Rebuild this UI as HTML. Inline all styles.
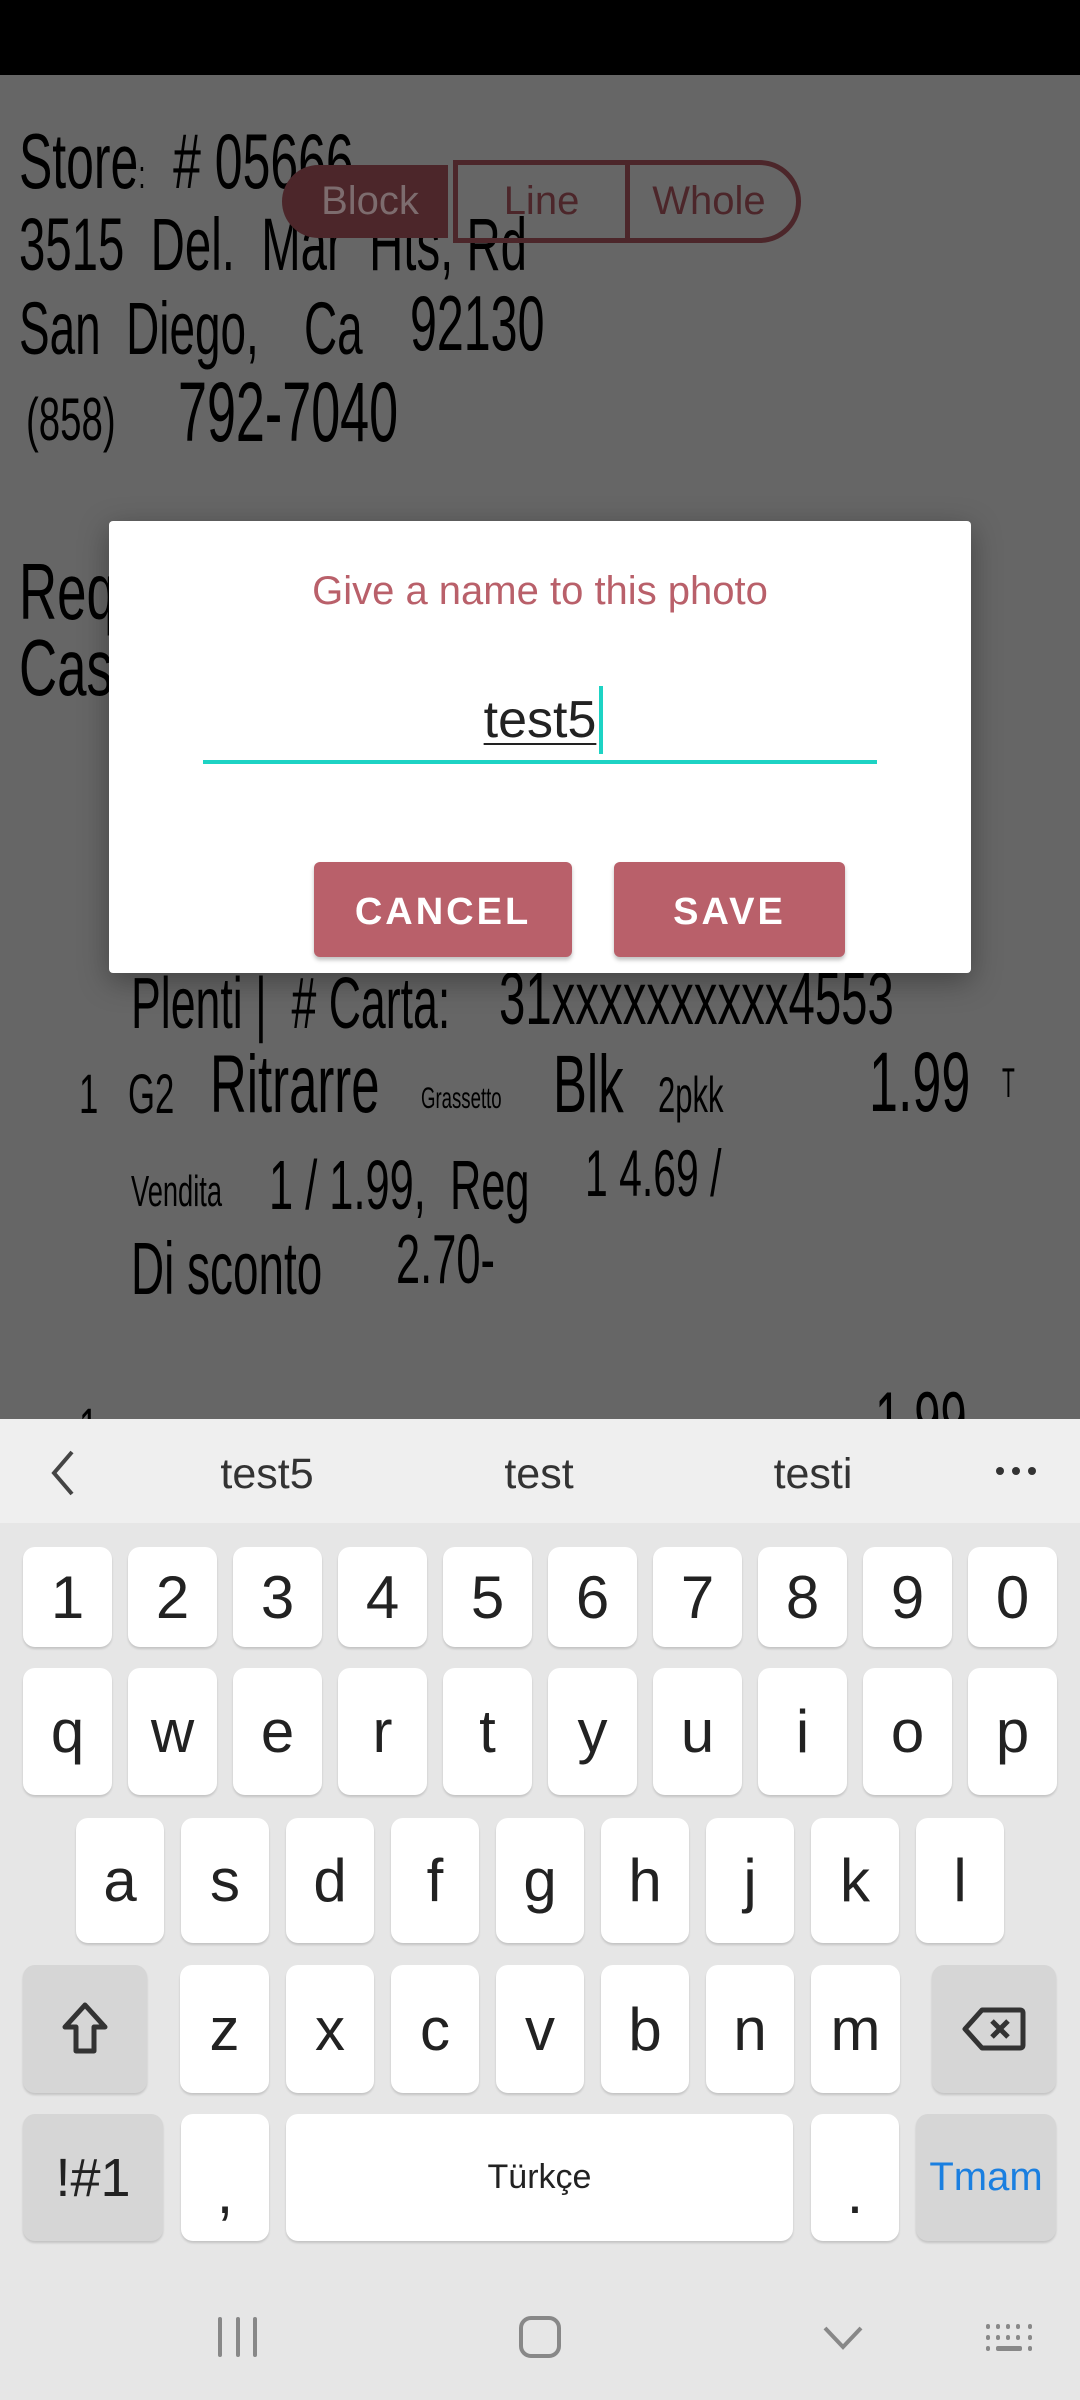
<!DOCTYPE html>
<html><head><meta charset="utf-8"><style>
*{margin:0;padding:0;box-sizing:border-box}
body{width:1080px;height:2400px;position:relative;overflow:hidden;background:#666;font-family:"Liberation Sans",sans-serif}
.a{position:absolute}
.r{position:absolute;color:#000;font-family:"Liberation Sans",sans-serif;transform-origin:0 0;white-space:nowrap;line-height:1}
.k{position:absolute;background:#fff;border-radius:12px;box-shadow:0 2px 2px rgba(0,0,0,.15);color:#222;display:flex;align-items:center;justify-content:center;font-size:60px}
.s{background:#d6d6d6}
.sg{position:absolute;top:1450px;font-size:43px;color:#333;transform:translateX(-50%)}
</style></head><body>
<div class="a" style="left:0;top:0;width:1080px;height:75px;background:#000"></div>

<div class="r" style="left:19px;top:122px;font-size:78px;transform:scaleX(.64)">Store<span style="font-size:40px">:</span> &nbsp;# 05666</div>
<div class="r" style="left:19px;top:208px;font-size:74px;transform:scaleX(.64)">3515 &nbsp;Del. &nbsp;Mar &nbsp;Hts, Rd</div>
<div class="r" style="left:19px;top:292px;font-size:74px;transform:scaleX(.62)">San &nbsp;Diego,</div>
<div class="r" style="left:304px;top:292px;font-size:74px;transform:scaleX(.62)">Ca</div>
<div class="r" style="left:410px;top:284px;font-size:78px;transform:scaleX(.62)">92130</div>
<div class="r" style="left:26px;top:390px;font-size:60px;transform:scaleX(.64)">(858)</div>
<div class="r" style="left:178px;top:370px;font-size:84px;transform:scaleX(.62)">792-7040</div>
<div class="r" style="left:19px;top:552px;font-size:80px;transform:scaleX(.66)">Req</div>
<div class="r" style="left:19px;top:628px;font-size:80px;transform:scaleX(.66)">Cas</div>
<div class="r" style="left:131px;top:968px;font-size:72px;transform:scaleX(.62)">Plenti | &nbsp;# Carta:</div>
<div class="r" style="left:499px;top:962px;font-size:74px;transform:scaleX(.64)">31xxxxxxxxxx4553</div>
<div class="r" style="left:79px;top:1066px;font-size:56px;transform:scaleX(.62)">1</div>
<div class="r" style="left:128px;top:1066px;font-size:56px;transform:scaleX(.62)">G2</div>
<div class="r" style="left:210px;top:1044px;font-size:82px;transform:scaleX(.62)">Ritrarre</div>
<div class="r" style="left:421px;top:1084px;font-size:30px;transform:scaleX(.62)">Grassetto</div>
<div class="r" style="left:553px;top:1044px;font-size:82px;transform:scaleX(.62)">Blk</div>
<div class="r" style="left:658px;top:1070px;font-size:50px;transform:scaleX(.62)">2pkk</div>
<div class="r" style="left:869px;top:1040px;font-size:84px;transform:scaleX(.62)">1.99</div>
<div class="r" style="left:1002px;top:1062px;font-size:42px;transform:scaleX(.5)">T</div>
<div class="r" style="left:131px;top:1170px;font-size:44px;transform:scaleX(.62)">Vendita</div>
<div class="r" style="left:269px;top:1150px;font-size:70px;transform:scaleX(.62)">1 / 1.99, &nbsp;Reg</div>
<div class="r" style="left:585px;top:1140px;font-size:66px;transform:scaleX(.62)">1 4.69 /</div>
<div class="r" style="left:131px;top:1232px;font-size:74px;transform:scaleX(.62)">Di sconto</div>
<div class="r" style="left:396px;top:1224px;font-size:70px;transform:scaleX(.62)">2.70-</div>
<div class="r" style="left:79px;top:1400px;font-size:56px;transform:scaleX(.62)">1</div>
<div class="r" style="left:875px;top:1382px;font-size:76px;transform:scaleX(.62)">1.99</div>

<!-- toggle -->
<div class="a" style="left:282px;top:165px;width:166px;height:73px;background:#4c262a;border-radius:37px 0 0 37px;color:#7d6c6e;font-size:40px;display:flex;align-items:center;justify-content:center;padding-left:10px">Block</div>
<div class="a" style="left:453px;top:160px;width:177px;height:83px;border:5px solid #4c262a;color:#4c262a;font-size:40px;display:flex;align-items:center;justify-content:center">Line</div>
<div class="a" style="left:625px;top:160px;width:176px;height:83px;border:5px solid #4c262a;border-radius:0 42px 42px 0;color:#4c262a;font-size:40px;display:flex;align-items:center;justify-content:center;padding-right:8px">Whole</div>

<!-- dialog -->
<div class="a" style="left:109px;top:521px;width:862px;height:452px;background:#fff;border-radius:4px;box-shadow:0 8px 30px rgba(0,0,0,.35)"></div>
<div class="a" style="left:109px;top:569px;width:862px;text-align:center;font-size:40px;color:#b9606a">Give a name to this photo</div>
<div class="a" style="left:203px;top:690px;width:674px;text-align:center;font-size:52px;color:#222"><span style="text-decoration:underline;text-decoration-thickness:2px;text-underline-offset:6px">test5</span></div>
<div class="a" style="left:599px;top:686px;width:4px;height:68px;background:#1dd3c4"></div>
<div class="a" style="left:203px;top:760px;width:674px;height:4px;background:#1dd3c4"></div>
<div class="a" style="left:314px;top:862px;width:258px;height:95px;background:#b9606a;border-radius:6px;box-shadow:0 3px 4px rgba(0,0,0,.25);color:#fff;font-weight:bold;font-size:38px;letter-spacing:3px;display:flex;align-items:center;justify-content:center;padding-top:6px">CANCEL</div>
<div class="a" style="left:614px;top:862px;width:231px;height:95px;background:#b9606a;border-radius:6px;box-shadow:0 3px 4px rgba(0,0,0,.25);color:#fff;font-weight:bold;font-size:38px;letter-spacing:3px;display:flex;align-items:center;justify-content:center;padding-top:6px">SAVE</div>

<!-- keyboard -->
<div class="a" style="left:0;top:1419px;width:1080px;height:981px;background:#e6e6e6"></div>
<div class="a" style="left:0;top:1419px;width:1080px;height:104px;background:#efefef"></div>
<svg class="a" style="left:48px;top:1448px" width="30" height="50"><path d="M24 4 L6 25 L24 46" fill="none" stroke="#444" stroke-width="4"/></svg>
<div class="sg" style="left:267px">test5</div>
<div class="sg" style="left:539px">test</div>
<div class="sg" style="left:813px">testi</div>
<svg class="a" style="left:994px;top:1464px" width="46" height="14"><circle cx="6" cy="7" r="4" fill="#333"/><circle cx="22" cy="7" r="4" fill="#333"/><circle cx="38" cy="7" r="4" fill="#333"/></svg>

<div class="k" style="left:23px;top:1547px;width:89px;height:100px">1</div>
<div class="k" style="left:128px;top:1547px;width:89px;height:100px">2</div>
<div class="k" style="left:233px;top:1547px;width:89px;height:100px">3</div>
<div class="k" style="left:338px;top:1547px;width:89px;height:100px">4</div>
<div class="k" style="left:443px;top:1547px;width:89px;height:100px">5</div>
<div class="k" style="left:548px;top:1547px;width:89px;height:100px">6</div>
<div class="k" style="left:653px;top:1547px;width:89px;height:100px">7</div>
<div class="k" style="left:758px;top:1547px;width:89px;height:100px">8</div>
<div class="k" style="left:863px;top:1547px;width:89px;height:100px">9</div>
<div class="k" style="left:968px;top:1547px;width:89px;height:100px">0</div>

<div class="k" style="left:23px;top:1668px;width:89px;height:127px">q</div>
<div class="k" style="left:128px;top:1668px;width:89px;height:127px">w</div>
<div class="k" style="left:233px;top:1668px;width:89px;height:127px">e</div>
<div class="k" style="left:338px;top:1668px;width:89px;height:127px">r</div>
<div class="k" style="left:443px;top:1668px;width:89px;height:127px">t</div>
<div class="k" style="left:548px;top:1668px;width:89px;height:127px">y</div>
<div class="k" style="left:653px;top:1668px;width:89px;height:127px">u</div>
<div class="k" style="left:758px;top:1668px;width:89px;height:127px">i</div>
<div class="k" style="left:863px;top:1668px;width:89px;height:127px">o</div>
<div class="k" style="left:968px;top:1668px;width:89px;height:127px">p</div>

<div class="k" style="left:76px;top:1818px;width:88px;height:125px">a</div>
<div class="k" style="left:181px;top:1818px;width:88px;height:125px">s</div>
<div class="k" style="left:286px;top:1818px;width:88px;height:125px">d</div>
<div class="k" style="left:391px;top:1818px;width:88px;height:125px">f</div>
<div class="k" style="left:496px;top:1818px;width:88px;height:125px">g</div>
<div class="k" style="left:601px;top:1818px;width:88px;height:125px">h</div>
<div class="k" style="left:706px;top:1818px;width:88px;height:125px">j</div>
<div class="k" style="left:811px;top:1818px;width:88px;height:125px">k</div>
<div class="k" style="left:916px;top:1818px;width:88px;height:125px">l</div>

<div class="k s" style="left:23px;top:1965px;width:124px;height:128px"><svg width="50" height="56"><path d="M25 4 L5 26 H16 V50 H34 V26 H45 Z" fill="none" stroke="#333" stroke-width="5" stroke-linejoin="round"/></svg></div>
<div class="k" style="left:180px;top:1965px;width:89px;height:128px">z</div>
<div class="k" style="left:286px;top:1965px;width:88px;height:128px">x</div>
<div class="k" style="left:391px;top:1965px;width:88px;height:128px">c</div>
<div class="k" style="left:496px;top:1965px;width:88px;height:128px">v</div>
<div class="k" style="left:601px;top:1965px;width:88px;height:128px">b</div>
<div class="k" style="left:706px;top:1965px;width:88px;height:128px">n</div>
<div class="k" style="left:811px;top:1965px;width:89px;height:128px">m</div>
<div class="k s" style="left:932px;top:1965px;width:124px;height:128px"><svg width="64" height="46"><path d="M20 4 H58 Q61 4 61 7 V39 Q61 42 58 42 H20 L3 23 Z" fill="none" stroke="#333" stroke-width="5" stroke-linejoin="round"/><path d="M30 15 L46 31 M46 15 L30 31" stroke="#333" stroke-width="5"/></svg></div>

<div class="k s" style="left:23px;top:2114px;width:140px;height:127px;font-size:54px">!#1</div>
<div class="k" style="left:181px;top:2114px;width:88px;height:127px;padding-top:30px">,</div>
<div class="k" style="left:286px;top:2114px;width:507px;height:127px;font-size:34px">Türkçe</div>
<div class="k" style="left:811px;top:2114px;width:88px;height:127px;padding-top:30px">.</div>
<div class="k s" style="left:916px;top:2114px;width:140px;height:127px;font-size:40px;color:#1a7fe0">Tmam</div>

<!-- nav -->
<div class="a" style="left:218px;top:2317px;width:4px;height:40px;background:#888;border-radius:2px"></div>
<div class="a" style="left:236px;top:2317px;width:4px;height:40px;background:#888;border-radius:2px"></div>
<div class="a" style="left:253px;top:2317px;width:4px;height:40px;background:#888;border-radius:2px"></div>
<div class="a" style="left:519px;top:2316px;width:42px;height:42px;border:4px solid #888;border-radius:12px"></div>
<svg class="a" style="left:822px;top:2325px" width="42" height="26"><path d="M3 3 L21 22 L39 3" fill="none" stroke="#888" stroke-width="4"/></svg>
<svg class="a" style="left:986px;top:2324px" width="48" height="28"><g fill="#888"><rect x="0" y="0" width="4" height="5" rx="2"/><rect x="10" y="0" width="4" height="5" rx="2"/><rect x="20" y="0" width="4" height="5" rx="2"/><rect x="30" y="0" width="4" height="5" rx="2"/><rect x="42" y="0" width="4" height="5" rx="2"/><rect x="0" y="11" width="4" height="5" rx="2"/><rect x="10" y="11" width="4" height="5" rx="2"/><rect x="20" y="11" width="4" height="5" rx="2"/><rect x="30" y="11" width="4" height="5" rx="2"/><rect x="42" y="11" width="4" height="5" rx="2"/><rect x="0" y="22" width="4" height="5" rx="2"/><rect x="10" y="22" width="26" height="5" rx="2"/><rect x="42" y="22" width="4" height="5" rx="2"/></g></svg>
</body></html>
